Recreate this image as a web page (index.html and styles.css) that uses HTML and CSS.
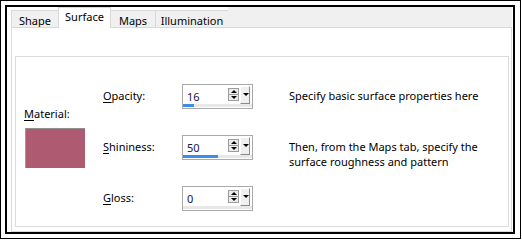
FILE: index.html
```html
<!DOCTYPE html>
<html>
<head>
<meta charset="utf-8">
<link rel="stylesheet" href="styles.css">
</head>
<body>
<div class="frame">
  <div class="dialog">
    <div class="tabs">
      <div class="tab tab-shape">Shape</div>
      <div class="tab tab-surface active">Surface</div>
      <div class="tab tab-maps">Maps</div>
      <div class="tab tab-illum">Illumination</div>
      <div class="tab-fill"></div>
    </div>
    <div class="page">
      <div class="group">
        <div class="material">
          <div class="mat-label"><u>M</u>aterial:</div>
          <div class="swatch"></div>
        </div>
        <div class="fields">
          <div class="field-label"><u>O</u>pacity:</div>
          <div class="spin">
            <div class="spin-top">
              <span class="val">16</span>
              <div class="arrows"><span class="btn up"></span><span class="btn down"></span></div>
              <div class="drop"></div>
            </div>
            <div class="track"><div class="fill" style="width:16%"></div></div>
          </div>
          <div class="desc">Specify basic surface properties here</div>

          <div class="field-label"><u>S</u>hininess:</div>
          <div class="spin">
            <div class="spin-top">
              <span class="val">50</span>
              <div class="arrows"><span class="btn up"></span><span class="btn down"></span></div>
              <div class="drop"></div>
            </div>
            <div class="track"><div class="fill" style="width:50%"></div></div>
          </div>
          <div class="desc">Then, from the Maps tab, specify the surface roughness and pattern</div>

          <div class="field-label"><u>G</u>loss:</div>
          <div class="spin">
            <div class="spin-top">
              <span class="val">0</span>
              <div class="arrows"><span class="btn up"></span><span class="btn down"></span></div>
              <div class="drop"></div>
            </div>
            <div class="track"><div class="fill" style="width:0%"></div></div>
          </div>
          <div class="desc"></div>
        </div>
      </div>
    </div>
  </div>
</div>
</body>
</html>
```

FILE: styles.css
```css
* { box-sizing: border-box; margin: 0; padding: 0; }
html, body { background: #fff; }
body {
  width: 522px; height: 240px; overflow: hidden;
  font-family: "Noto Sans", "Open Sans", sans-serif;
  font-size: 11px; line-height: 15px; color: #000;
}
u { text-decoration: underline; text-underline-offset: 2px; }
.frame {
  width: 521px; height: 239px;
  border: 1px solid #000;
  padding: 4px;
}
.dialog {
  width: 510px; height: 229px;
  border: 2px solid #000;
  padding: 0 1px 0 4px;
  display: flex; flex-direction: column;
}
.tabs {
  height: 20px; display: flex; align-items: flex-end;
}
.tab {
  height: 17px; background: #f0f0f0;
  border: 1px solid #d9d9d9; border-bottom: none;
  margin-right: -1px; text-align: center;
  line-height: 17px; padding-top: 1px;
}
.tab-shape { width: 48px; }
.tab-surface { width: 53px; }
.tab-maps { width: 46px; }
.tab-illum { width: 74px; }
.tab.active {
  height: 21px; background: #fff; margin-bottom: -1px;
  position: relative; z-index: 1; line-height: 17px; padding-top: 0;
}
.tab-fill { flex: 1; height: 20px; background: #f0f0f0; }
.page {
  flex: 1; border: 1px solid #d9d9d9; background: #fff;
  padding: 28px 2px 3px 3px;
}
.group {
  height: 171px; border: 1px solid #dcdcdc;
  display: flex;
}
.material {
  width: 87px; padding: 49px 0 0 8px;
}
.mat-label { height: 22px; }
.swatch {
  width: 60px; height: 40px; margin-left: 1px;
  background: #ae5a70;
  border-top: 1px solid #8f8f8f; border-left: 1px solid #9a9a9a;
}
.fields {
  display: grid;
  grid-template-columns: 79px 71px 1fr;
  grid-auto-rows: 24px;
  row-gap: 27px;
  padding-top: 27px;
  column-gap: 0;
}
.field-label { padding-top: 4px; }
.desc { padding: 4px 0 0 36px; width: 230px; }
.spin {
  width: 71px; height: 25px;
  border: 1px solid #a9a9a9; background: #fff;
  display: flex; flex-direction: column;
}
.spin-top { height: 20px; display: flex; align-items: flex-start; }
.val { flex: 1; padding: 4px 0 0 4px; color: #151540; }
.arrows { width: 11px; margin-top: 3px; display: flex; flex-direction: column; }
.btn {
  height: 7px; width: 11px; background: #ececec;
  border: 1px solid #9c9c9c; position: relative;
}
.btn + .btn { margin-top: -1px; }
.btn::after {
  content: ""; position: absolute; left: 2px; width: 0; height: 0;
  border-left: 3px solid transparent; border-right: 3px solid transparent;
}
.up::after { top: 1px; border-bottom: 3px solid #000; }
.down::after { top: 1px; border-top: 3px solid #000; }
.drop {
  width: 10px; height: 18px; margin: 1px 2px 0 1px;
  background: #f0f0f0;
  border-right: 1px solid #8a8a8a; border-bottom: 1px solid #8a8a8a;
  border-top: 1px solid #fff; border-left: 1px solid #fff;
  position: relative;
}
.drop::after {
  content: ""; position: absolute; left: 2px; top: 6px;
  border-left: 3px solid transparent; border-right: 3px solid transparent;
  border-top: 3px solid #000;
}
.track { height: 3px; margin: 0 0 1px 0; background: #e8e8e8; }
.fill { height: 3px; background: #3a8ee6; }
```
